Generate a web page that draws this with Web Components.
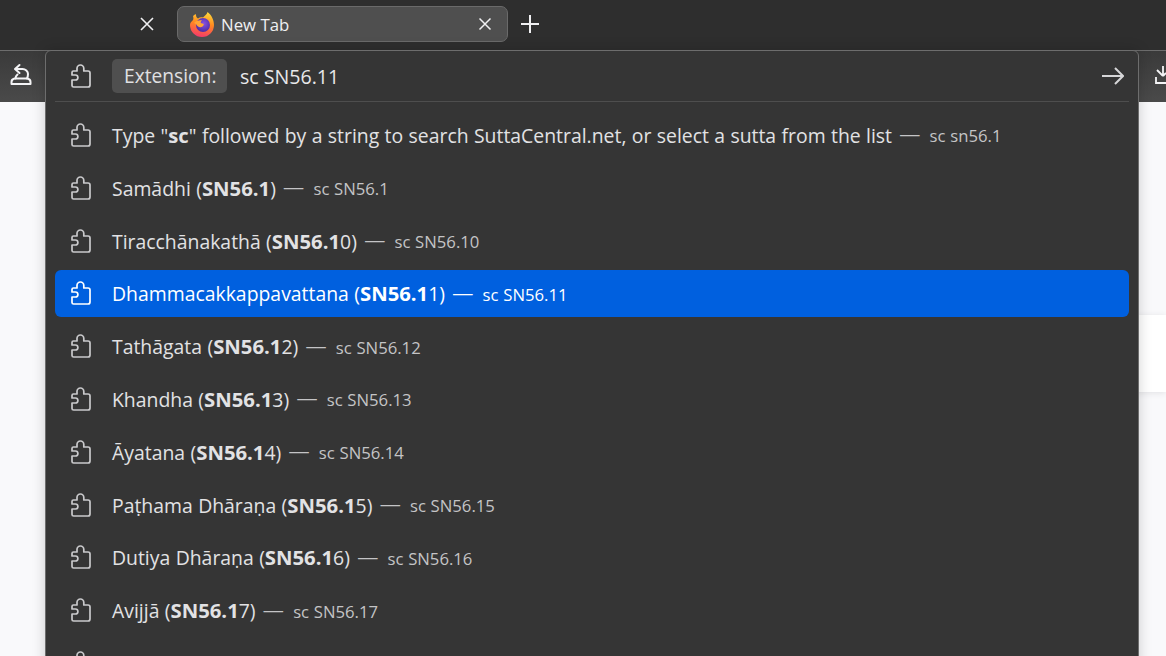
<!DOCTYPE html>
<html>
<head>
<meta charset="utf-8">
<title>New Tab</title>
<style>
  html, body { margin: 0; height: 100%; overflow: hidden; background: #f9f9fb; }
  body { font-family: "Open Sans", "Noto Sans", sans-serif; }
</style>
</head>
<body>
<fx-browser>
  <fx-tabstrip slot="tabs"></fx-tabstrip>
  <fx-toolbar slot="toolbar"></fx-toolbar>
  <fx-newtab slot="content"></fx-newtab>
  <fx-urlbar slot="overlay" value="sc SN56.11">
    <fx-result action="sc sn56.1">Type "<b>sc</b>" followed by a string to search SuttaCentral.net, or select a sutta from the list</fx-result>
    <fx-result action="sc SN56.1">Samādhi (<b>SN56.1</b>)</fx-result>
    <fx-result action="sc SN56.10">Tiracchānakathā (<b>SN56.1</b>0)</fx-result>
    <fx-result action="sc SN56.11" selected>Dhammacakkappavattana (<b>SN56.1</b>1)</fx-result>
    <fx-result action="sc SN56.12">Tathāgata (<b>SN56.1</b>2)</fx-result>
    <fx-result action="sc SN56.13">Khandha (<b>SN56.1</b>3)</fx-result>
    <fx-result action="sc SN56.14">Āyatana (<b>SN56.1</b>4)</fx-result>
    <fx-result action="sc SN56.15">Paṭhama Dhāraṇa (<b>SN56.1</b>5)</fx-result>
    <fx-result action="sc SN56.16">Dutiya Dhāraṇa (<b>SN56.1</b>6)</fx-result>
    <fx-result action="sc SN56.17">Avijjā (<b>SN56.1</b>7)</fx-result>
    <fx-result></fx-result>
  </fx-urlbar>
</fx-browser>

<script>
  const PUZZLE = `<svg width="20" height="24" viewBox="0 0 20 24" fill="none" stroke="currentColor" stroke-width="1.700" stroke-linejoin="round"><path d="M2.600 23H17a2 2 0 0 0 2-2V9a2 2 0 0 0-2-2h-4.200V4.400a3.400 3.400 0 0 0-6.800 0V7H2.400A1.400 1.400 0 0 0 1 8.400V11h3.400a2.500 2.500 0 0 1 0 5H1v5.400A1.600 1.600 0 0 0 2.600 23z"/></svg>`;

  class FxIcon extends HTMLElement {
    constructor() {
      super();
      this.attachShadow({mode: 'open'});
      this.shadowRoot.innerHTML = `<style>:host{display:flex;width:20px;height:24px;flex:none}</style>${PUZZLE}`;
    }
  }

  class FxBrowser extends HTMLElement {
    constructor() {
      super();
      this.attachShadow({mode: 'open'});
      this.shadowRoot.innerHTML = `<style>
        :host { display: flex; flex-direction: column; position: relative; height: 656px; overflow: hidden; }
        .overlay { position: absolute; left: 45px; top: 50px; }
      </style>
      <slot name="tabs"></slot>
      <slot name="toolbar"></slot>
      <slot name="content"></slot>
      <div class="overlay"><slot name="overlay"></slot></div>`;
    }
  }

  class FxTabstrip extends HTMLElement {
    constructor() {
      super();
      this.attachShadow({mode: 'open'});
      this.shadowRoot.innerHTML = `<style>
        :host { display: flex; align-items: center; height: 50px; box-sizing: border-box; padding: 0 0 2px 139px; background: #2e2e2e; color: #f0f0f2; }
        .tab { display: flex; align-items: center; box-sizing: border-box; width: 331px; height: 36px; margin-left: 22px; padding: 0 15px 0 12px; border: 1px solid #6a6a6a; border-radius: 7px; background: #4f4f4f; font-size: 16.800px; }
        .tab span { flex: 1; margin-left: 7px; }
        .plus { margin-left: 13px; }
        svg { display: block; }
      </style>
      <svg width="16" height="16" viewBox="0 0 16 16" stroke="currentColor" stroke-width="1.600"><path d="M2 2l12 12M14 2L2 14"/></svg>
      <div class="tab">
        <svg width="24" height="26" viewBox="0 0 24 26">
          <defs>
            <linearGradient id="f1" x1="0.6" y1="0" x2="0.4" y2="1"><stop offset="0" stop-color="#ffd73a"/><stop offset="0.45" stop-color="#ff8a1f"/><stop offset="1" stop-color="#f5386b"/></linearGradient>
            <radialGradient id="f2" cx="0.55" cy="0.4" r="0.65"><stop offset="0" stop-color="#8a52e0"/><stop offset="1" stop-color="#44289f"/></radialGradient>
          </defs>
          <path d="M3 5C3.500 7 3.500 8 3 9 1.500 10.500 0 12 0 14a12 12 0 0 0 24 0C24 9 21.500 4 17.500 1 17 3.500 14.500 4.500 13 6.500 11 6 9.500 6.500 8 7.500 7 7 6 6 6 4L5.500 3z" fill="url(#f1)"/>
          <circle cx="13" cy="14" r="7" fill="url(#f2)"/>
          <path d="M4 12c2-2 5-3 8-2.500-1 .8-1.500 1.500-1.200 2.500 1 .6 2 .4 3 1 0 1.500-1 3-3 3.200-2 .2-4-1-4.800-3.200z" fill="#ffa436"/>
        </svg>
        <span>New Tab</span>
        <svg width="14" height="14" viewBox="0 0 14 14" stroke="currentColor" stroke-width="1.500"><path d="M1.500 1.500l11 11M12.500 1.500l-11 11"/></svg>
      </div>
      <svg class="plus" width="18" height="18" viewBox="0 0 18 18" stroke="currentColor" stroke-width="2"><path d="M9 0v18M0 9h18"/></svg>`;
    }
  }

  class FxToolbar extends HTMLElement {
    constructor() {
      super();
      this.attachShadow({mode: 'open'});
      this.shadowRoot.innerHTML = `<style>
        :host { display: flex; align-items: center; justify-content: space-between; box-sizing: border-box; height: 52px; border-top: 1px solid #6d6d6d; padding: 0 0 5px 10px; background: linear-gradient(#3a3a3a, #4a4a4a); color: #f4f4f6; }
        svg { display: block; }
      </style>
      <svg width="22" height="22" viewBox="0 0 22 22" fill="none" stroke="currentColor" stroke-width="2" stroke-linejoin="round" stroke-linecap="round"><path d="M1.500 21H20.500V19c0-1.500-1-3-3-3.500H4.500C2.500 16 1.500 17.500 1.500 19z"/><path d="M5.500 15.500c0-1.500.8-3 2-4"/><path d="M6 6h6.500c3 0 5.500 2.500 5.500 5 0 2-.5 3.500-1 4.500"/><path d="M9.500 2L5 6l4.500 4"/></svg>
      <svg width="11" height="22" viewBox="0 0 11 22" fill="none" stroke="currentColor" stroke-width="1.800"><path d="M1 14v6h10"/><path d="M2 7l6 6M8 3v10M8 13l3-3"/></svg>`;
    }
  }

  class FxNewtab extends HTMLElement {
    constructor() {
      super();
      this.attachShadow({mode: 'open'});
      this.shadowRoot.innerHTML = `<style>
        :host { display: flex; justify-content: flex-end; align-items: flex-start; flex: 1; box-sizing: border-box; padding-top: 213px; background: #f9f9fb; }
        .card { width: 100px; height: 77px; background: #fff; box-shadow: 0 1px 6px rgba(58,57,68,.12); }
      </style><div class="card"></div>`;
    }
  }

  class FxUrlbar extends HTMLElement {
    constructor() {
      super();
      this.attachShadow({mode: 'open'});
      this.shadowRoot.innerHTML = `<style>
        :host { display: flex; flex-direction: column; box-sizing: border-box; width: 1094px; height: 640px; border: 1px solid #6d6d6d; border-radius: 6px 6px 0 0; background: #353535; color: #fbfbfe; box-shadow: 0 0 14px rgba(0,0,0,.18); }
        .input { display: flex; flex: none; align-items: center; box-sizing: border-box; height: 51px; margin: 0 9px; padding-left: 16px; border-bottom: 1px solid #4e4e4e; font-size: 19.600px; color: #e8e8ea; }
        .chip { margin-left: 21px; width: 115px; box-sizing: border-box; padding-left: 12px; font-size: 19.200px; line-height: 34px; border-radius: 5px; background: #4f4f4f; color: #e0e0e2; }
        .value { flex: 1; margin-left: 13px; }
        .arrow { margin-right: 5px; color: #d6d6d8; display: block; }
        .icon { color: #d0d0d2; }
        .list { padding-top: 6.600px; }
      </style>
      <div class="input">
        <fx-icon class="icon"></fx-icon>
        <span class="chip">Extension:</span>
        <span class="value"></span>
        <svg class="arrow" width="22" height="18" viewBox="0 0 22 18" fill="none" stroke="currentColor" stroke-width="2"><path d="M0 9h21M13 1l8 8-8 8"/></svg>
      </div>
      <div class="list"><slot></slot></div>`;
      this.shadowRoot.querySelector('.value').textContent = this.getAttribute('value');
    }
  }

  class FxResult extends HTMLElement {
    constructor() {
      super();
      this.attachShadow({mode: 'open'});
      this.shadowRoot.innerHTML = `<style>
        :host { display: block; padding: 3px 9px; }
        .row { display: flex; align-items: center; height: 46.800px; padding-left: 16px; border-radius: 6px; font-size: 19.400px; word-spacing: .35px; color: #e2e2e4; white-space: nowrap; }
        .row.sel { background: #0060df; color: #fff; }
        .icon { color: #c9c9cb; margin-right: 21px; }
        .sel .icon { color: #fff; }
        .sep { margin: 0 10px 0 8px; font-family: "Liberation Sans", sans-serif; font-size: 19.600px; color: #c4c4c6; }
        .action { padding-top: 2px; font-size: 16.700px; color: #c4c4c6; }
        .sel .sep, .sel .action { color: #fff; }
        ::slotted(b) { font-weight: 700; font-size: 20.300px; }
      </style>
      <div class="row">
        <fx-icon class="icon"></fx-icon>
        <span><slot></slot></span>
        <span class="sep">—</span>
        <span class="action"></span>
      </div>`;
      if (this.hasAttribute('action')) this.shadowRoot.querySelector('.action').textContent = this.getAttribute('action');
      else this.shadowRoot.querySelector('.sep').remove();
      if (this.hasAttribute('selected')) this.shadowRoot.querySelector('.row').classList.add('sel');
    }
  }

  customElements.define('fx-icon', FxIcon);
  customElements.define('fx-browser', FxBrowser);
  customElements.define('fx-tabstrip', FxTabstrip);
  customElements.define('fx-toolbar', FxToolbar);
  customElements.define('fx-newtab', FxNewtab);
  customElements.define('fx-urlbar', FxUrlbar);
  customElements.define('fx-result', FxResult);
</script>
</body>
</html>
